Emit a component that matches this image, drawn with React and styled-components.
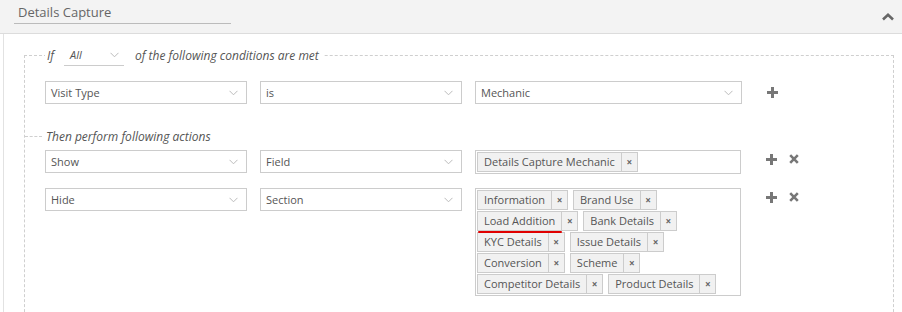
import React from "react";
import styled, { createGlobalStyle } from "styled-components";

const GlobalStyle = createGlobalStyle`
  body {
    margin: 0;
    background: #ffffff;
    font-family: "Open Sans", "Liberation Sans", sans-serif;
    color: #555;
  }
`;

const conditionFields = [["Visit Type", "is", "Mechanic"]];

const actions = [
  { op: "Show", target: "Field", tags: [["Details Capture Mechanic"]] },
  {
    op: "Hide",
    target: "Section",
    tags: [
      ["Information", "Brand Use"],
      ["Load Addition", "Bank Details"],
      ["KYC Details", "Issue Details"],
      ["Conversion", "Scheme"],
      ["Competitor Details", "Product Details"],
    ],
  },
];

const ChevronUp = () => (
  <svg width="12" height="8" viewBox="0 0 12 8">
    <path d="M1 6.5 L6 1.8 L11 6.5" fill="none" stroke="#666" strokeWidth="2.6" />
  </svg>
);

const Caret = () => (
  <svg width="9" height="6" viewBox="0 0 9 6">
    <path d="M0.5 0.8 L4.5 4.8 L8.5 0.8" fill="none" stroke="#bbb" strokeWidth="1" />
  </svg>
);

const PlusIcon = () => (
  <svg width="11" height="11" viewBox="0 0 11 11">
    <path d="M4 0 H7 V4 H11 V7 H7 V11 H4 V7 H0 V4 H4 Z" fill="#777" />
  </svg>
);

const TimesIcon = () => (
  <svg width="10" height="10" viewBox="0 0 10 10">
    <path d="M1.2 1.2 L8.8 8.8 M8.8 1.2 L1.2 8.8" stroke="#777" strokeWidth="2.6" />
  </svg>
);

const Panel = styled.div`
  width: 902px;
  height: 312px;
  overflow: hidden;
`;

const Header = styled.div`
  height: 34px;
  background: #f3f3f3;
  border-bottom: 1px solid #dcdcdc;
  display: flex;
  align-items: center;
  justify-content: space-between;
  padding: 0 8px 0 14px;
  box-sizing: border-box;
`;

const Title = styled.div`
  width: 213px;
  padding: 0 0 2px 4px;
  border-bottom: 1px solid #bbb;
  font-size: 13px;
  color: #666;
  line-height: 17px;
  margin-top: -6px;
`;

const Body = styled.div`
  margin-left: 3px;
  border-left: 1px solid #e2e2e2;
  height: 278px;
  padding-top: 9px;
  box-sizing: border-box;
`;

const Rules = styled.fieldset`
  margin: 0 8px 0 20px;
  padding: 0 0 40px 20px;
  border: 1px dashed #cfcfcf;
  min-width: 0;
`;

const Legend = styled.legend`
  padding: 0 4px 0 2px;
  display: flex;
  align-items: center;
  height: 24px;
  font-style: italic;
  font-size: 12px;
  color: #555;
`;

const InlineSelect = styled.div`
  width: 60px;
  height: 22px;
  margin: 0 11px 0 10px;
  border-bottom: 1px solid #ccc;
  display: flex;
  align-items: center;
  justify-content: space-between;
  padding: 0 5px 0 6px;
  box-sizing: border-box;
  font-size: 11px;
  color: #555;
`;

const Row = styled.div`
  display: flex;
  align-items: flex-start;
  gap: 13px;
  margin-top: ${(p) => p.$gap}px;
`;

const Select = styled.div`
  width: ${(p) => p.$w}px;
  height: 23px;
  border: 1px solid #ccc;
  box-sizing: border-box;
  display: flex;
  align-items: center;
  justify-content: space-between;
  padding: 0 8px 0 5px;
  font-size: 11px;
  color: #555;
`;

const MultiBox = styled.div`
  width: 266px;
  min-height: 23px;
  border: 1px solid #ccc;
  box-sizing: border-box;
  padding: 1px;
  display: flex;
  flex-direction: column;
  gap: 1px;
`;

const TagLine = styled.div`
  display: flex;
  gap: 5px;
`;

const Tag = styled.div`
  display: flex;
  height: 20px;
  border: 1px solid #ccc;
  background: #f1f1f1;
  box-sizing: border-box;
  font-size: 11px;
  color: #555;
`;

const TagText = styled.span`
  padding: 0 6px;
  line-height: 18px;
  position: relative;
`;

const Mark = styled.span`
  position: absolute;
  left: 0;
  right: -1px;
  bottom: -3px;
  height: 2px;
  background: #e00000;
  border-radius: 1px;
`;

const TagClose = styled.span`
  width: 15px;
  border-left: 1px solid #ccc;
  display: flex;
  align-items: center;
  justify-content: center;
  font-size: 10px;
  font-weight: bold;
  color: #666;
`;

const Tools = styled.div`
  display: flex;
  gap: 12px;
  margin: ${(p) => p.$top}px 0 0 12px;
`;

const Then = styled.div`
  position: relative;
  margin: 24px 0 0 1px;
  font-style: italic;
  font-size: 12px;
  line-height: 17px;
  color: #555;
  &::before {
    content: "";
    position: absolute;
    left: -21px;
    width: 17px;
    top: 8px;
    border-top: 1px dashed #cfcfcf;
  }
`;

const TagItem = ({ label }) => (
  <Tag>
    <TagText>
      {label}
      {label === "Load Addition" && <Mark />}
    </TagText>
    <TagClose>×</TagClose>
  </Tag>
);

export default function App() {
  return (
    <Panel>
      <GlobalStyle />
      <Header>
        <Title>Details Capture</Title>
        <ChevronUp />
      </Header>
      <Body>
        <Rules>
          <Legend>
            If
            <InlineSelect>
              All <Caret />
            </InlineSelect>
            of the following conditions are met
          </Legend>
          {conditionFields.map(([a, b, c]) => (
            <Row $gap={14} key={a}>
              <Select $w={202}>
                {a} <Caret />
              </Select>
              <Select $w={202}>
                {b} <Caret />
              </Select>
              <Select $w={267}>
                {c} <Caret />
              </Select>
              <Tools $top={6}>
                <PlusIcon />
              </Tools>
            </Row>
          ))}
          <Then>Then perform following actions</Then>
          {actions.map((act, i) => (
            <Row $gap={i === 0 ? 5 : 14} key={act.op}>
              <Select $w={202}>
                {act.op} <Caret />
              </Select>
              <Select $w={202}>
                {act.target} <Caret />
              </Select>
              <MultiBox>
                {act.tags.map((line) => (
                  <TagLine key={line[0]}>
                    {line.map((t) => (
                      <TagItem key={t} label={t} />
                    ))}
                  </TagLine>
                ))}
              </MultiBox>
              <Tools $top={4}>
                <PlusIcon />
                <TimesIcon />
              </Tools>
            </Row>
          ))}
        </Rules>
      </Body>
    </Panel>
  );
}
